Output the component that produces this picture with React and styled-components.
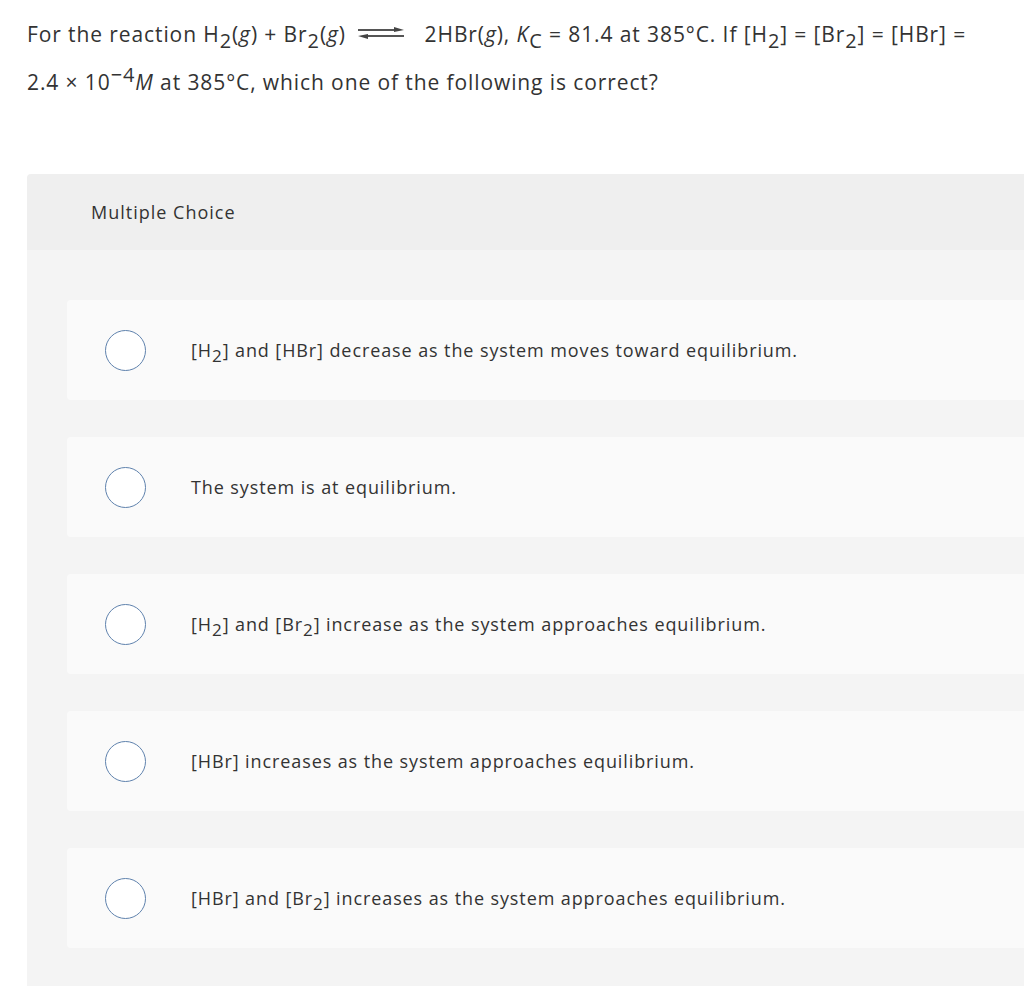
import React from 'react';
import styled, { createGlobalStyle } from 'styled-components';

const GlobalStyle = createGlobalStyle`
  html, body {
    margin: 0;
    padding: 0;
    background: #ffffff;
    overflow: hidden;
  }
  body {
    font-family: 'Open Sans', 'Liberation Sans', sans-serif;
    color: #333333;
  }
`;

function EquilibriumArrow() {
  return (
    <ArrowSvg width="50" height="14" viewBox="0 0 50 14">
      <line x1="2" y1="4" x2="42" y2="4" stroke="#555" strokeWidth="2" />
      <polygon points="48,4 38,1 38,6" fill="#444" />
      <line x1="8" y1="10" x2="48" y2="10" stroke="#555" strokeWidth="2" />
      <polygon points="2,10 12,8 12,13" fill="#444" />
    </ArrowSvg>
  );
}

export default function App() {
  // answer texts live here so the styled parts below are defined when they render
  const options = [
    <>[H<Sub>2</Sub>] and [HBr] decrease as the system moves toward equilibrium.</>,
    <>The system is at equilibrium.</>,
    <>[H<Sub>2</Sub>] and [Br<Sub>2</Sub>] increase as the system approaches equilibrium.</>,
    <>[HBr] increases as the system approaches equilibrium.</>,
    <>[HBr] and [Br<Sub>2</Sub>] increases as the system approaches equilibrium.</>,
  ];

  return (
    <>
      <GlobalStyle />
      <Page>
        <Question>
          For the reaction H<Sub>2</Sub>(<i>g</i>) + Br<Sub>2</Sub>(<i>g</i>) <EquilibriumArrow /> 2HBr(<i>g</i>),{' '}
          <i>K</i><Sub>C</Sub> = 81.4 at 385°C. If [H<Sub>2</Sub>] = [Br<Sub>2</Sub>] = [HBr] =
          <br />
          2.4 × 10<Sup>−4</Sup><i>M</i> at 385°C, which one of the following is correct?
        </Question>

        <Panel>
          <PanelHeader>Multiple Choice</PanelHeader>
          <PanelBody>
            {options.map((text, i) => (
              <OptionCard key={i}>
                <Radio />
                <OptionText>{text}</OptionText>
              </OptionCard>
            ))}
          </PanelBody>
        </Panel>
      </Page>
    </>
  );
}

const Page = styled.div`
  width: 1024px;
  height: 986px;
  overflow: hidden;
`;

const Question = styled.p`
  margin: 10px 0 0 27px;
  font-size: 21px;
  letter-spacing: 0.9px;
  line-height: 48px;
  color: #333333;
  white-space: nowrap;
`;

const Sub = styled.span`
  font-size: 0.95em;
  position: relative;
  top: 0.3em;
  line-height: 0;
`;

const Sup = styled.span`
  font-size: 0.95em;
  position: relative;
  top: -0.4em;
  line-height: 0;
`;

const ArrowSvg = styled.svg`
  vertical-align: middle;
  margin: 0 12px 0 4px;
  position: relative;
  top: -3px;
`;

const Panel = styled.section`
  margin: 68px 0 0 27px;
  border-top-left-radius: 4px;
  overflow: hidden;
`;

const PanelHeader = styled.div`
  height: 76px;
  display: flex;
  align-items: center;
  padding-left: 64px;
  background: #efefef;
  font-size: 18px;
  letter-spacing: 1px;
  color: #333333;
`;

const PanelBody = styled.div`
  background: #f4f4f4;
  padding: 50px 0 60px 40px;
  display: flex;
  flex-direction: column;
  gap: 37px;
`;

const OptionCard = styled.div`
  height: 100px;
  background: #fafafa;
  border-radius: 4px 0 0 4px;
  display: flex;
  align-items: center;
  padding-left: 38px;
`;

const Radio = styled.span`
  flex: none;
  width: 39px;
  height: 39px;
  border: 1.5px solid #5f82ad;
  border-radius: 50%;
  background: #ffffff;
  margin-right: 45px;
`;

const OptionText = styled.span`
  font-size: 18px;
  letter-spacing: 0.9px;
  color: #333333;
`;
